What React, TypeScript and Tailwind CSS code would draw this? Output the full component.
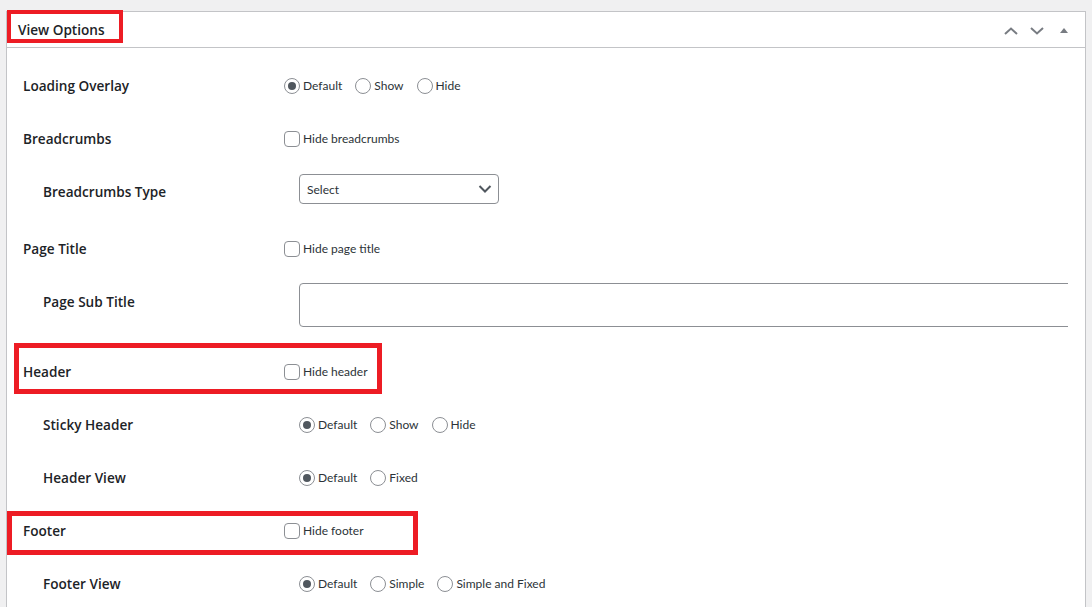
import { ReactNode } from "react";

type Option = { label: string; checked?: boolean };

const font = { fontFamily: '"Open Sans", "Noto Sans", sans-serif' };
const optionFont = { fontFamily: 'Lato, "Open Sans", sans-serif' };

const Radio = ({ checked }: { checked?: boolean }) => (
  <span className="flex h-4 w-4 shrink-0 items-center justify-center rounded-full border border-[#8c8f94] bg-white">
    {checked && <span className="h-2 w-2 rounded-full bg-[#50575e]" />}
  </span>
);

const RadioGroup = ({ options }: { options: Option[] }) => (
  <div className="flex h-5 items-center gap-[13px]" style={optionFont}>
    {options.map((o) => (
      <label key={o.label} className="flex items-center gap-[3px] text-[12px] text-[#2c3338]">
        <Radio checked={o.checked} />
        {o.label}
      </label>
    ))}
  </div>
);

const Checkbox = ({ label }: { label: string }) => (
  <label className="flex h-5 items-center gap-[3px] text-[12px] text-[#2c3338]" style={optionFont}>
    <span className="h-4 w-4 shrink-0 rounded-[4px] border border-[#8c8f94] bg-white" />
    {label}
  </label>
);

const Row = ({
  label,
  sub,
  children,
  mark,
  controlTop = "pt-[18px]",
  height = "h-[53px]",
}: {
  label: string;
  sub?: boolean;
  children: ReactNode;
  mark?: ReactNode;
  controlTop?: string;
  height?: string;
}) => (
  <div className={`relative flex items-start ${height} ${sub ? "pl-[36px]" : "pl-[16px]"}`}>
    <div
      className={`shrink-0 pt-[18px] text-[13.6px] font-semibold leading-5 text-[#1d2327] ${
        sub ? "w-[256px]" : "w-[261px]"
      }`}
    >
      {label}
    </div>
    <div className={`min-w-0 flex-1 overflow-hidden ${controlTop}`}>{children}</div>
    {mark}
  </div>
);

const Chevron = ({ up }: { up?: boolean }) => (
  <svg width="14" height="8" viewBox="0 0 14 8" fill="none">
    <path
      d={up ? "M1 7 L7 1.5 L13 7" : "M1 1 L7 6.5 L13 1"}
      stroke="#787c82"
      strokeWidth="2"
    />
  </svg>
);

export default function App() {
  return (
    <div className="min-h-screen bg-[#f0f0f1] px-[6px] pt-[11px]" style={font}>
      <div className="relative border border-[#c3c4c7] bg-white">
        {/* panel heading */}
        <div className="flex h-[36px] items-center justify-between border-b border-[#c3c4c7] pl-[11px] pr-[15px]">
          <h2 className="pt-[2px] text-[13.6px] font-semibold text-[#1d2327]">View Options</h2>
          <div className="flex items-center pt-[2px]">
            <button className="flex h-[34px] w-[26px] items-center justify-center">
              <Chevron up />
            </button>
            <button className="flex h-[34px] w-[26px] items-center justify-center">
              <Chevron />
            </button>
            <button className="ml-[8px] flex h-[34px] w-[12px] items-center justify-center">
              <span className="h-0 w-0 border-x-[4px] border-b-[5px] border-x-transparent border-b-[#787c82]" />
            </button>
          </div>
        </div>
        <span className="pointer-events-none absolute left-0 top-[-2px] h-[33px] w-[116px] border-[4px] border-[#ed1c24]" />

        <div className="pt-[10px] pr-[17px]">
          <Row label="Loading Overlay">
            <RadioGroup options={[{ label: "Default", checked: true }, { label: "Show" }, { label: "Hide" }]} />
          </Row>
          <Row label="Breadcrumbs">
            <Checkbox label="Hide breadcrumbs" />
          </Row>
          <Row label="Breadcrumbs Type" sub height="h-[57px]" controlTop="pt-[10px]">
            <div
              className="flex h-[30px] w-[200px] items-center justify-between rounded-[4px] border border-[#8c8f94] pl-[7px] pr-[6px] text-[12px] text-[#2c3338]"
              style={optionFont}
            >
              <span className="pt-[2px]">Select</span>
              <svg width="14" height="8" viewBox="0 0 14 8" fill="none">
                <path d="M1.5 1 L7 6.5 L12.5 1" stroke="#50575e" strokeWidth="2" />
              </svg>
            </div>
          </Row>
          <Row label="Page Title">
            <Checkbox label="Hide page title" />
          </Row>
          <Row label="Page Sub Title" sub height="h-[70px]" controlTop="pt-[9px]">
            <div className="h-[44px] w-[900px] rounded-[4px] border border-[#8c8f94] bg-white" />
          </Row>
          <Row
            label="Header"
            mark={
              <span className="pointer-events-none absolute left-[7px] top-[-1px] h-[51px] w-[368px] border-[5px] border-[#ed1c24]" />
            }
          >
            <Checkbox label="Hide header" />
          </Row>
          <Row label="Sticky Header" sub>
            <RadioGroup options={[{ label: "Default", checked: true }, { label: "Show" }, { label: "Hide" }]} />
          </Row>
          <Row label="Header View" sub>
            <RadioGroup options={[{ label: "Default", checked: true }, { label: "Fixed" }]} />
          </Row>
          <Row
            label="Footer"
            mark={
              <span className="pointer-events-none absolute left-0 top-[8px] h-[44px] w-[411px] border-[5px] border-[#ed1c24]" />
            }
          >
            <Checkbox label="Hide footer" />
          </Row>
          <Row label="Footer View" sub>
            <RadioGroup
              options={[{ label: "Default", checked: true }, { label: "Simple" }, { label: "Simple and Fixed" }]}
            />
          </Row>
        </div>
      </div>
    </div>
  );
}
